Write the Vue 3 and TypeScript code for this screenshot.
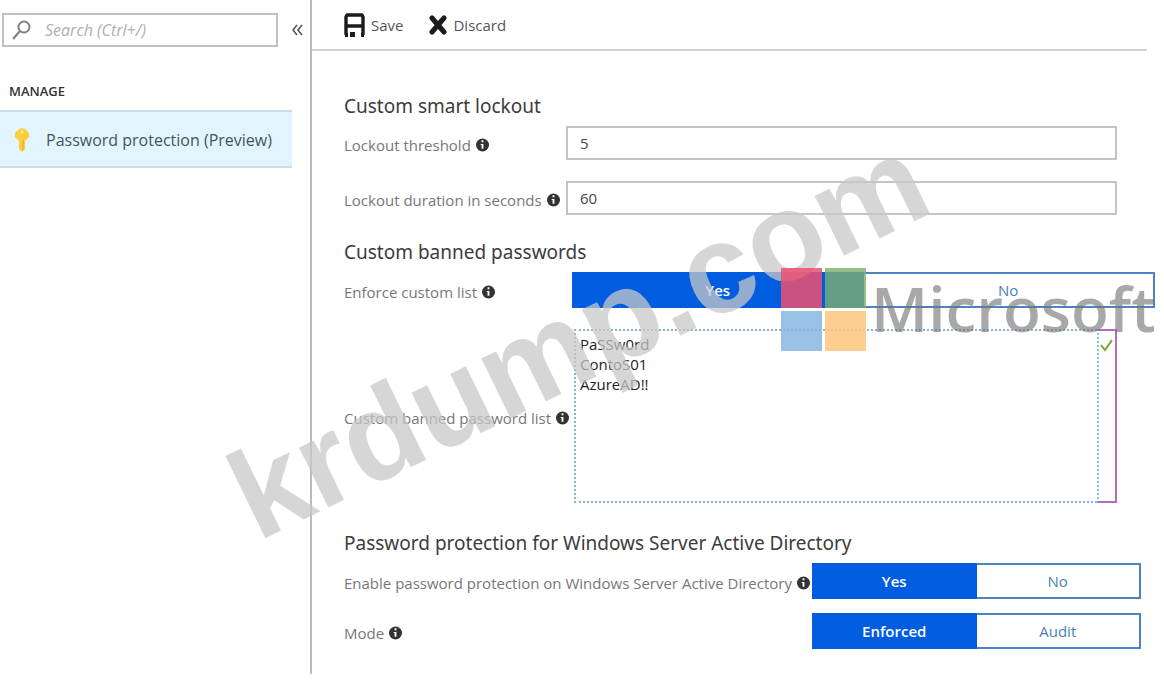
<script setup lang="ts">
import { ref } from 'vue'

const search = ref('')
const threshold = ref('5')
const duration = ref('60')
const banned = ref('PaSSw0rd\nContoS01\nAzureAD!!')
const enforceList = ref('Yes')
const enableAd = ref('Yes')
const mode = ref('Enforced')
</script>

<template>
  <div class="page">
    <aside class="sidebar">
      <div class="search-row">
        <label class="search">
          <svg width="20" height="22" viewBox="0 0 20 22" fill="none" stroke="#808080" stroke-width="2" aria-hidden="true">
            <circle cx="13" cy="8" r="5.500" />
            <path d="M9 12L2 20" />
          </svg>
          <input v-model="search" type="text" placeholder="Search (Ctrl+/)" aria-label="Search" />
        </label>
        <button class="collapse" type="button" aria-label="Collapse menu">
          <svg width="11" height="12" viewBox="0 0 11 12" fill="none" stroke="#555" stroke-width="1.600" aria-hidden="true">
            <path d="M5 1L1 6L5 11M10 1L6 6L10 11" />
          </svg>
        </button>
      </div>
      <h3 class="group">MANAGE</h3>
      <a class="nav-item" href="#">
        <svg width="14" height="24" viewBox="0 0 14 24" aria-hidden="true">
          <path d="M4 1L7 0L10 1L14 5V9L10 13V21L7 24L4 21V13L0 9V5Z" fill="#fbcf3b" />
          <path d="M8 12V22" stroke="#e2a914" stroke-width="1" />
          <circle cx="7" cy="4" r="1.500" fill="#fff0b8" />
        </svg>
        <span>Password protection (Preview)</span>
      </a>
    </aside>

    <main class="main">
      <div class="toolbar">
        <button type="button">
          <svg width="21" height="24" viewBox="0 0 21 24" aria-hidden="true">
            <path d="M2 22V4L3 2H18L19 4V22M2 13H19" fill="none" stroke="#1b1b1b" stroke-width="3.400" stroke-linejoin="round" />
            <path d="M1 20H4V24H1ZM17 20H20V24H17ZM6 19H11V24H6Z" fill="#1b1b1b" />
          </svg>
          <span>Save</span>
        </button>
        <button type="button">
          <svg width="18" height="20" viewBox="0 0 18 20" aria-hidden="true">
            <path d="M3 3L15 17M15 3L3 17" stroke="#1b1b1b" stroke-width="5" stroke-linecap="round" />
          </svg>
          <span>Discard</span>
        </button>
      </div>

      <form class="content" @submit.prevent>
        <h2>Custom smart lockout</h2>
        <div class="row">
          <label class="name" for="threshold">Lockout threshold
            <svg class="info" viewBox="0 0 14 14" aria-hidden="true"><circle cx="7" cy="7" r="7" /><path d="M6 2H8V4H6ZM5 6H8V11H6V7H5Z" /></svg>
          </label>
          <input id="threshold" v-model="threshold" class="field" type="text" />
        </div>
        <div class="row spaced">
          <label class="name" for="duration">Lockout duration in seconds
            <svg class="info" viewBox="0 0 14 14" aria-hidden="true"><circle cx="7" cy="7" r="7" /><path d="M6 2H8V4H6ZM5 6H8V11H6V7H5Z" /></svg>
          </label>
          <input id="duration" v-model="duration" class="field" type="text" />
        </div>

        <h2>Custom banned passwords</h2>
        <div class="row">
          <span id="enforce" class="name">Enforce custom list
            <svg class="info" viewBox="0 0 14 14" aria-hidden="true"><circle cx="7" cy="7" r="7" /><path d="M6 2H8V4H6ZM5 6H8V11H6V7H5Z" /></svg>
          </span>
          <div class="toggle wide" role="group" aria-labelledby="enforce">
            <button v-for="o in ['Yes', 'No']" :key="o" type="button" :class="{ on: enforceList === o }" :aria-pressed="enforceList === o" @click="enforceList = o">{{ o }}</button>
          </div>
        </div>
        <div class="row spaced last">
          <label class="name" for="banned">Custom banned password list
            <svg class="info" viewBox="0 0 14 14" aria-hidden="true"><circle cx="7" cy="7" r="7" /><path d="M6 2H8V4H6ZM5 6H8V11H6V7H5Z" /></svg>
          </label>
          <div class="area">
            <textarea id="banned" v-model="banned" spellcheck="false"></textarea>
            <div class="valid">
              <svg width="13" height="13" viewBox="0 0 13 13" fill="none" stroke="#76a82c" stroke-width="2" aria-hidden="true">
                <path d="M1 6L5 11L12 1" />
              </svg>
            </div>
          </div>
        </div>

        <h2>Password protection for Windows Server Active Directory</h2>
        <div class="row">
          <span id="enable" class="name">Enable password protection on Windows Server Active Directory
            <svg class="info" viewBox="0 0 14 14" aria-hidden="true"><circle cx="7" cy="7" r="7" /><path d="M6 2H8V4H6ZM5 6H8V11H6V7H5Z" /></svg>
          </span>
          <div class="toggle short" role="group" aria-labelledby="enable">
            <button v-for="o in ['Yes', 'No']" :key="o" type="button" :class="{ on: enableAd === o }" :aria-pressed="enableAd === o" @click="enableAd = o">{{ o }}</button>
          </div>
        </div>
        <div class="row close">
          <span id="mode" class="name">Mode
            <svg class="info" viewBox="0 0 14 14" aria-hidden="true"><circle cx="7" cy="7" r="7" /><path d="M6 2H8V4H6ZM5 6H8V11H6V7H5Z" /></svg>
          </span>
          <div class="toggle short" role="group" aria-labelledby="mode">
            <button v-for="o in ['Enforced', 'Audit']" :key="o" type="button" :class="{ on: mode === o }" :aria-pressed="mode === o" @click="mode = o">{{ o }}</button>
          </div>
        </div>
      </form>
    </main>

    <div class="watermark">krdump.com</div>
    <div class="brand">
      <div class="tiles"><i class="red"></i><i class="green"></i><i class="blue"></i><i class="orange"></i></div>
      <span>Microsoft</span>
    </div>
  </div>
</template>

<style>
body {
  background: #fff;
}
</style>

<style scoped>
.page {
  position: relative;
  display: flex;
  overflow: hidden;
  min-height: 674px;
  margin-bottom: 9px;
  font-family: "Open Sans", "Noto Sans", sans-serif;
  font-size: 15px;
  line-height: 20px;
  color: #666;
}
* {
  box-sizing: border-box;
}
button,
input,
textarea {
  font: inherit;
  color: inherit;
}
button {
  padding: 0;
  border: 0;
  background: none;
}
.sidebar {
  flex: none;
  width: 312px;
  border-right: 2px solid #bcbcbc;
}
.search-row {
  display: flex;
  align-items: center;
  gap: 14px;
  padding: 13px 0 0 2px;
}
.search {
  display: flex;
  align-items: center;
  gap: 14px;
  width: 276px;
  height: 34px;
  padding-left: 7px;
  border: 2px solid #c0c0c0;
}
.search input {
  flex: 1;
  min-width: 0;
  border: 0;
  outline: 0;
  padding: 0;
  background: none;
  font-size: 16px;
  font-style: italic;
}
.search input::placeholder {
  color: #b0b0b0;
  opacity: 1;
}
.collapse {
  display: flex;
}
.group {
  margin: 34px 0 9px 9px;
  font-size: 13px;
  line-height: 20px;
  font-weight: 600;
  color: #333;
}
.nav-item {
  display: flex;
  align-items: center;
  gap: 17px;
  width: 292px;
  height: 58px;
  padding: 2px 0 0 15px;
  border-top: 2px solid #cbdde6;
  border-bottom: 2px solid #cbdde6;
  background: #e2f5fe;
  color: #44545f;
  font-size: 16px;
  text-decoration: none;
  white-space: nowrap;
}
.main {
  flex: 1;
  min-width: 0;
}
.toolbar {
  display: flex;
  align-items: center;
  gap: 26px;
  height: 51px;
  margin-right: 17px;
  padding-left: 32px;
  border-bottom: 2px solid #d2d2d2;
}
.toolbar button {
  display: flex;
  align-items: center;
  gap: 6px;
  color: #555;
}
.content {
  padding: 18px 9px 0 32px;
}
h2 {
  margin: 23px 0 6px;
  font-family: "Noto Sans", sans-serif;
  font-size: 19px;
  line-height: 28px;
  font-weight: 400;
  color: #3c3c3c;
  white-space: nowrap;
}
.row {
  display: flex;
  align-items: center;
}
.spaced {
  margin-top: 21px;
}
.close {
  margin-top: 14px;
}
.last {
  margin-bottom: 26px;
}
.name {
  display: flex;
  align-items: center;
  gap: 5px;
  flex: none;
  width: 222px;
  padding-top: 4px;
  white-space: nowrap;
  color: #777;
}
.info {
  flex: none;
  width: 13px;
  height: 14px;
}
.info circle {
  fill: #333;
}
.info path {
  fill: #fff;
}
.field {
  flex: 1;
  min-width: 0;
  height: 34px;
  margin-right: 38px;
  padding: 0 12px;
  border: 2px solid #c4c4c4;
  background: #fff;
  color: #444;
}
.toggle {
  display: grid;
  grid-template-columns: 1fr 1fr;
  height: 36px;
  border: 2px solid #4a82c3;
}
.toggle button {
  color: #4b82b8;
}
.toggle .on {
  margin: -2px 0 -2px -2px;
  background: #005de0;
  color: #fff;
  font-weight: 600;
}
.wide {
  flex: 1;
  margin-left: 6px;
}
.short {
  width: 329px;
  margin: 0 14px 0 auto;
}
.area {
  display: flex;
  flex: 1;
  height: 174px;
  margin: 0 38px 0 8px;
}
textarea {
  flex: 1;
  min-width: 0;
  padding: 3px 4px;
  border: 2px dotted #83b3dc;
  border-right: 0;
  outline: 0;
  resize: none;
  background: #fff;
  color: #222;
}
.valid {
  width: 20px;
  padding: 8px 0 0 1px;
  border: 2px solid #b26cc0;
  border-left: 2px dotted #6fd5e2;
}
.valid svg {
  display: block;
}
.watermark {
  position: absolute;
  left: 257px;
  top: 427px;
  font: bold 126px/144px "Liberation Sans", sans-serif;
  color: rgba(200, 200, 200, 0.74);
  transform: rotate(-26deg);
  transform-origin: 0 114px;
  white-space: nowrap;
  pointer-events: none;
}
.brand {
  position: absolute;
  left: 781px;
  top: 268px;
  display: flex;
  gap: 5px;
  pointer-events: none;
}
.brand span {
  font: 600 62px/80px "Open Sans", "Noto Sans", sans-serif;
  color: rgba(115, 115, 115, 0.62);
}
.tiles {
  display: grid;
  grid-template-columns: 41px 41px;
  grid-template-rows: 40px 40px;
  gap: 3px;
}
.red {
  background: rgba(236, 80, 112, 0.85);
}
.green {
  background: rgba(125, 174, 106, 0.8);
}
.blue {
  background: rgba(135, 182, 224, 0.85);
}
.orange {
  background: rgba(251, 199, 126, 0.85);
}
</style>
